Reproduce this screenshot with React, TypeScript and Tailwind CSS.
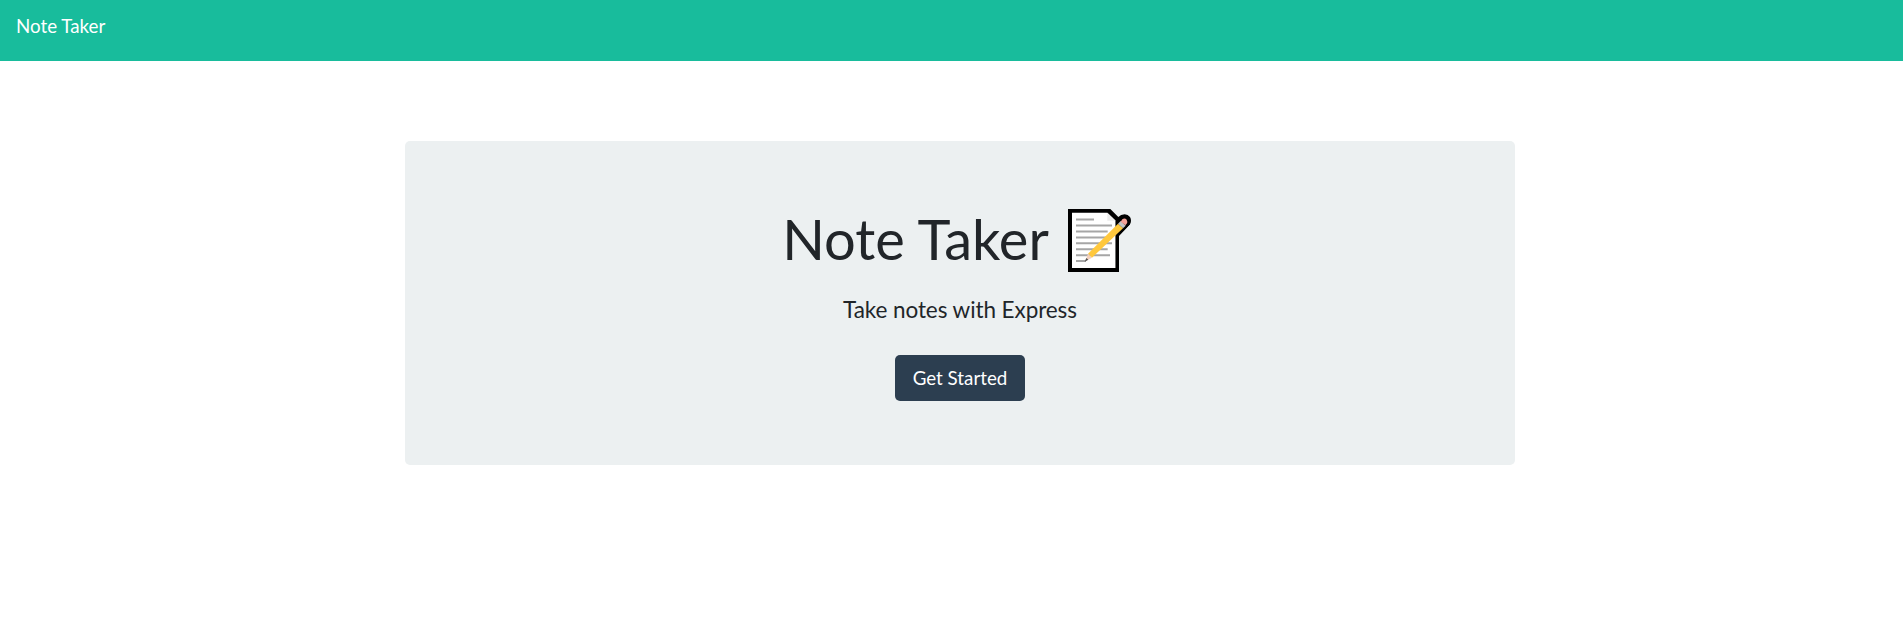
function NoteIcon() {
  return (
    <svg className="h-[66px] w-[66px] shrink-0" viewBox="51 36 198 198" fill="none" aria-hidden="true">
      <path d="M54 42H181L205 66Q212 58 224 58Q234 59 240 66Q246 77 240 88L207 122V231H54Z" fill="#000" />
      <path d="M66 53H172L197 77V219H66Z" fill="#fff" />
      <path d="M172 53L197 77H172Z" fill="#ececec" />
      <path
        d="M78 73.500H132M78 91.500H186M78 109.500H173M78 127.500H186M78 145H186M78 162.500H173M78 180.500H180M78 198H108"
        stroke="#a6a6a6"
        strokeWidth="6"
      />
      <path d="M197 77V219H207V122L240 88L227 72L205 66Z" fill="#000" />
      <path d="M114 176L126 188L106 199Z" fill="#f3d0bd" />
      <path d="M109 189L115 194L104 200Z" fill="#555" />
      <path d="M114 176L204 86L219 100L126 188Q123 183 120 183Q119 177 114 176Z" fill="#ffc83d" />
      <path d="M204 86L212 78L227 92L219 100Z" fill="#c3c3c3" />
      <path d="M212 80L217 73Q224 68 230 74Q234 80 230 86L226 91Z" fill="#f4a096" />
    </svg>
  );
}

export default function App() {
  return (
    <div className="min-h-[626px] bg-white font-['Lato',sans-serif] text-[15px] text-[#212529]">
      <nav className="flex h-[61px] items-start bg-[#18bc9c] px-4 pt-3">
        <a href="#" className="text-[18.75px] leading-7 text-white">
          Note Taker
        </a>
      </nav>
      <main className="mt-20 ml-[405px] flex h-[324px] w-[1110px] flex-col items-center rounded-[5px] bg-[#ecf0f1] pt-16">
        <h1 className="flex h-[70px] items-center gap-[18px] pr-[5px] text-[56px] leading-[67px] font-normal">
          <span className="pb-1">Note Taker</span>
          <NoteIcon />
        </h1>
        <h4 className="mt-[21px] text-[22.5px] leading-7 font-normal tracking-[-0.08px]">Take notes with Express</h4>
        <a
          href="#"
          className="mt-[31px] flex h-[46px] w-[130px] items-center justify-center rounded-[5px] bg-[#2c3e50] text-[18.75px] text-white"
        >
          Get Started
        </a>
      </main>
    </div>
  );
}
